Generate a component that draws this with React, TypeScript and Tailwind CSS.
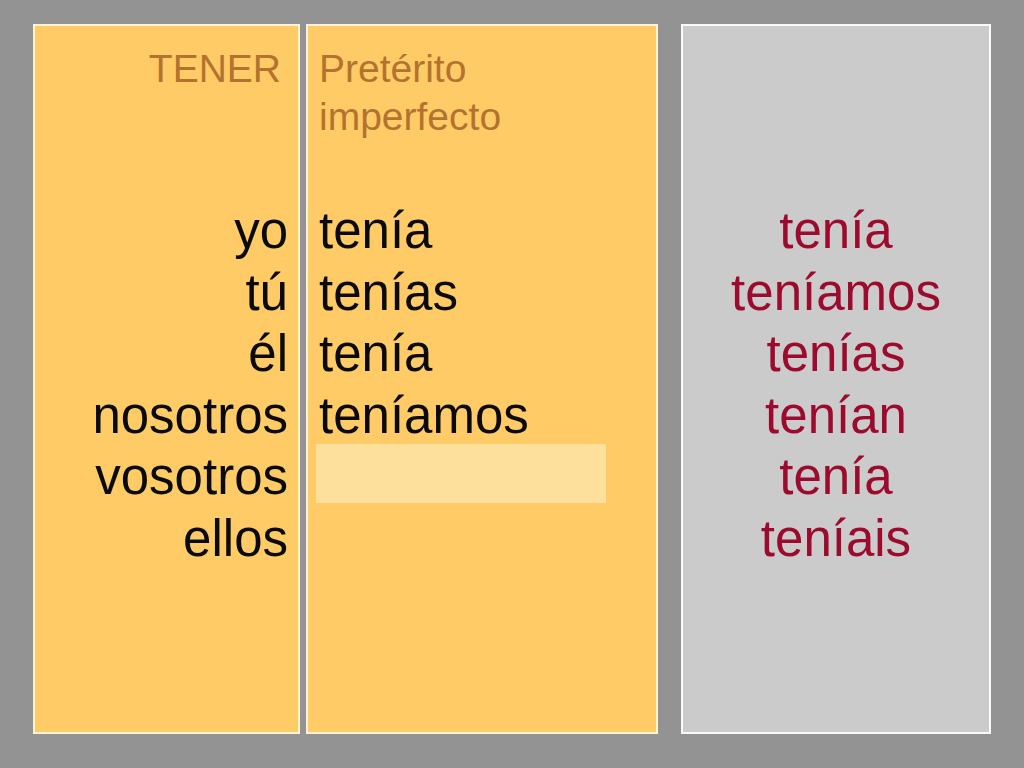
const persons = ["yo", "tú", "él", "nosotros", "vosotros", "ellos"];
const forms = ["tenía", "tenías", "tenía", "teníamos"];
const answers = ["tenía", "teníamos", "tenías", "tenían", "tenía", "teníais"];

export default function App() {
  return (
    <main
      className="flex h-[768px] w-[1024px] items-start bg-[#939393] pt-[24px] pl-[33px]"
      style={{ fontFamily: '"Liberation Sans", Arial, sans-serif' }}
    >
      <section className="h-[710px] w-[267px] border-2 border-[#fff4d6] bg-[#fecb66]">
        <h1 className="pt-[19px] pr-[17px] text-right text-[39px] leading-[48px] text-[#b3732f]">
          TENER
        </h1>
        <div className="mt-[107px] pr-[10px] text-right text-[51px] leading-[61.5px] text-[#0a0a0a]">
          {persons.map((p) => (
            <div key={p}>{p}</div>
          ))}
        </div>
      </section>

      <section className="ml-[6px] h-[710px] w-[352px] border-2 border-[#fff4d6] bg-[#fecb66]">
        <h2 className="pt-[19px] pl-[11px] text-[39px] leading-[48px] text-[#b3732f]">
          Pretérito
          <br />
          imperfecto
        </h2>
        <div className="mt-[59px] pl-[11px] text-[51px] leading-[61.5px] text-[#0a0a0a]">
          {forms.map((f, i) => (
            <div key={i}>{f}</div>
          ))}
          <div className="h-[61.5px]">
            <div className="-mt-[2px] -ml-[3px] h-[59px] w-[290px] bg-[#fde09c]" />
          </div>
        </div>
      </section>

      <section className="ml-[23px] h-[710px] w-[310px] border-2 border-[#fafafa] bg-[#cbcbcb]">
        <div className="mt-[174px] text-center text-[51px] leading-[61.5px] text-[#9c0a2e]">
          {answers.map((a, i) => (
            <div key={i}>{a}</div>
          ))}
        </div>
      </section>
    </main>
  );
}
